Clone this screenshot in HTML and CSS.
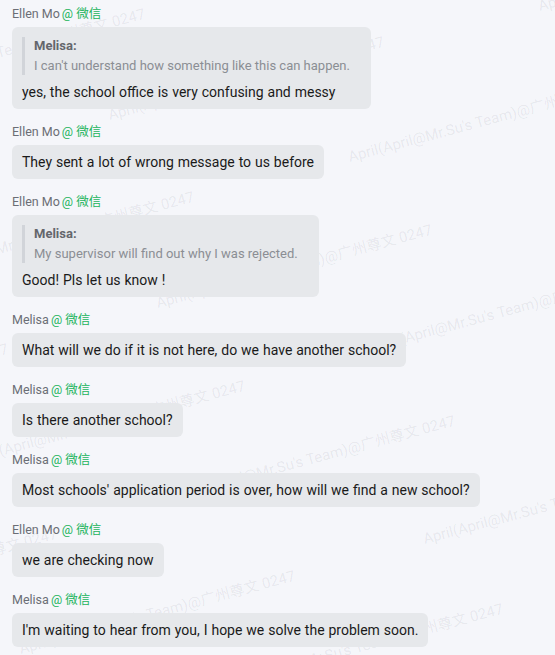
FILE: index.html
```html
<!DOCTYPE html>
<html lang="en">
<head>
<meta charset="utf-8">
<link rel="stylesheet" href="styles.css">
</head>
<body>
<div class="watermarks" aria-hidden="true">
  <span class="wm" style="left:-129px;top:80px">April(April@Mr.Su's Team)@广州尊文 0247</span>
  <span class="wm" style="left:110px;top:108px">April(April@Mr.Su's Team)@广州尊文 0247</span>
  <span class="wm" style="left:350px;top:150px">April(April@Mr.Su's Team)@广州尊文 0247</span>
  <span class="wm" style="left:540px;top:-1px">April(April@Mr.Su's Team)@广州尊文 0247</span>
  <span class="wm" style="left:158px;top:296px">April(April@Mr.Su's Team)@广州尊文 0247</span>
  <span class="wm" style="left:372px;top:340px">April(April@Mr.Su's Team)@广州尊文 0247</span>
  <span class="wm" style="left:-80px;top:263px">April(April@Mr.Su's Team)@广州尊文 0247</span>
  <span class="wm" style="left:-266px;top:415px">April(April@Mr.Su's Team)@广州尊文 0247</span>
  <span class="wm" style="left:-29px;top:452px">April(April@Mr.Su's Team)@广州尊文 0247</span>
  <span class="wm" style="left:181px;top:487px">April(April@Mr.Su's Team)@广州尊文 0247</span>
  <span class="wm" style="left:425px;top:532px">April(April@Mr.Su's Team)@广州尊文 0247</span>
  <span class="wm" style="left:-217px;top:600px">April(April@Mr.Su's Team)@广州尊文 0247</span>
  <span class="wm" style="left:21px;top:642px">April(April@Mr.Su's Team)@广州尊文 0247</span>
  <span class="wm" style="left:229px;top:675px">April(April@Mr.Su's Team)@广州尊文 0247</span>
</div>

<main class="chat">
  <div class="msg">
    <div class="sender"><span class="name">Ellen Mo</span><span class="source">@ 微信</span></div>
    <div class="bubble">
      <div class="quote">
        <div class="quote-author">Melisa:</div>
        <div class="quote-text">I can't understand how something like this can happen.</div>
      </div>
      <div class="text">yes, the school office is very confusing and messy</div>
    </div>
  </div>

  <div class="msg">
    <div class="sender"><span class="name">Ellen Mo</span><span class="source">@ 微信</span></div>
    <div class="bubble"><div class="text">They sent a lot of wrong message to us before</div></div>
  </div>

  <div class="msg">
    <div class="sender"><span class="name">Ellen Mo</span><span class="source">@ 微信</span></div>
    <div class="bubble">
      <div class="quote">
        <div class="quote-author">Melisa:</div>
        <div class="quote-text">My supervisor will find out why I was rejected.</div>
      </div>
      <div class="text">Good! Pls let us know !</div>
    </div>
  </div>

  <div class="msg">
    <div class="sender"><span class="name">Melisa</span><span class="source">@ 微信</span></div>
    <div class="bubble"><div class="text">What will we do if it is not here, do we have another school?</div></div>
  </div>

  <div class="msg">
    <div class="sender"><span class="name">Melisa</span><span class="source">@ 微信</span></div>
    <div class="bubble"><div class="text">Is there another school?</div></div>
  </div>

  <div class="msg">
    <div class="sender"><span class="name">Melisa</span><span class="source">@ 微信</span></div>
    <div class="bubble"><div class="text">Most schools' application period is over, how will we find a new school?</div></div>
  </div>

  <div class="msg">
    <div class="sender"><span class="name">Ellen Mo</span><span class="source">@ 微信</span></div>
    <div class="bubble"><div class="text">we are checking now</div></div>
  </div>

  <div class="msg">
    <div class="sender"><span class="name">Melisa</span><span class="source">@ 微信</span></div>
    <div class="bubble"><div class="text">I'm waiting to hear from you, I hope we solve the problem soon.</div></div>
  </div>
</main>
</body>
</html>
```
FILE: styles.css
```css
html, body {
  margin: 0;
  padding: 0;
  background: #f5f6fa;
}

body {
  font-family: Roboto, "Noto Sans CJK SC", sans-serif;
  color: #1a1a1a;
  position: relative;
  min-height: 655px;
  overflow: hidden;
}

.watermarks {
  position: absolute;
  inset: 0;
  overflow: hidden;
  z-index: 0;
  pointer-events: none;
}

.wm {
  position: absolute;
  white-space: nowrap;
  font-family: Roboto, "Noto Sans CJK SC", sans-serif;
  font-size: 15px;
  line-height: 15px;
  color: rgba(40, 50, 70, 0.08);
  transform: rotate(-15deg);
  transform-origin: 0 13px;
}

.chat {
  position: relative;
  z-index: 1;
  display: flex;
  flex-direction: column;
  align-items: flex-start;
  gap: 13px;
  padding: 4px 12px;
}

.msg {
  display: flex;
  flex-direction: column;
  align-items: flex-start;
  gap: 4px;
}

.sender {
  font-size: 12.5px;
  line-height: 18px;
  padding-top: 1px;
  white-space: nowrap;
}

.name {
  color: #6b6e75;
}

.source {
  color: #22b45c;
  margin-left: 2px;
}

.bubble {
  background: #e6e8eb;
  border-radius: 6px;
  padding: 7px 10px;
}

.text {
  font-size: 14px;
  line-height: 20px;
  word-spacing: 0.45px;
  white-space: nowrap;
}

.quote {
  margin: 3px 0 7px;
  border-left: 3px solid #d1d4d9;
  padding: 0 11px 0 9px;
  font-size: 13px;
  line-height: 18px;
}

.quote-author {
  font-weight: bold;
  color: #64666c;
}

.quote-text {
  margin-top: 2px;
  color: #8b8e94;
  white-space: nowrap;
}
```
